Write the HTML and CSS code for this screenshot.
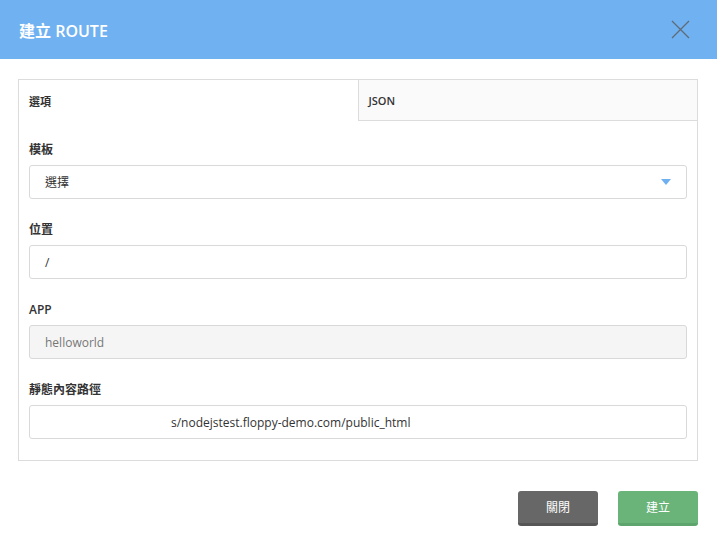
FILE: index.html
```html
<!DOCTYPE html>
<html>
<head>
<meta charset="utf-8">
<link rel="stylesheet" href="styles.css">
</head>
<body>
<div class="modal">
  <div class="header">
    <div class="title">建立 ROUTE</div>
    <svg class="close" width="19" height="19" viewBox="0 0 19 19"><path d="M1 1L18 18M18 1L1 18" stroke="#5f6b78" stroke-width="1.3" fill="none"/></svg>
  </div>
  <div class="body">
    <div class="panel">
      <div class="tabs">
        <div class="tab active">選項</div>
        <div class="tab">JSON</div>
      </div>
      <div class="form">
        <div class="field">
          <div class="label">模板</div>
          <div class="input select"><span>選擇</span><svg width="10" height="6" viewBox="0 0 10 6"><path d="M0 0H10L5 6Z" fill="#6fb1f0"/></svg></div>
        </div>
        <div class="field">
          <div class="label">位置</div>
          <div class="input">/</div>
        </div>
        <div class="field">
          <div class="label">APP</div>
          <div class="input disabled">helloworld</div>
        </div>
        <div class="field">
          <div class="label">靜態內容路徑</div>
          <div class="input scrolled"><span>s/nodejstest.floppy-demo.com/public_html</span></div>
        </div>
      </div>
    </div>
  </div>
  <div class="footer">
    <button class="btn close-btn">關閉</button>
    <button class="btn create-btn">建立</button>
  </div>
</div>
</body>
</html>
```
FILE: styles.css
```css
* { box-sizing: border-box; }
html, body { margin: 0; padding: 0; background: #fff; }
body { font-family: "Open Sans", "Noto Sans CJK TC", sans-serif; color: #333; width: 717px; height: 536px; overflow: hidden; }
.header { height: 59px; background: #70b2f1; display: flex; align-items: center; justify-content: space-between; padding: 0 27px 0 19px; }
.title { color: #fff; font-size: 16px; font-weight: 600; letter-spacing: 0; }
.close { display: block; }
.body { padding: 20px 19px 0 18px; }
.panel { border: 1px solid #dcdcdc; height: 382px; }
.tabs { display: flex; height: 41px; }
.tab { flex: 1; display: flex; align-items: center; padding-left: 10px; font-size: 11px; font-weight: 600; color: #333; background: #fafafa; border-left: 1px solid #dcdcdc; border-bottom: 1px solid #dcdcdc; }
.tab.active { background: #fff; border-left: none; border-bottom: none; }
.form { padding: 20px 10px 0 10px; display: flex; flex-direction: column; gap: 22px; }
.field { display: flex; flex-direction: column; }
.label { font-size: 12px; font-weight: 600; color: #333; height: 17px; line-height: 17px; margin-bottom: 7px; }
.input { height: 34px; border: 1px solid #d9d9d9; border-radius: 3px; font-size: 12px; color: #333; padding: 0 15px; display: flex; align-items: center; white-space: nowrap; }
.select { justify-content: space-between; padding-right: 15px; }
.select svg { display: block; }
.disabled { background: #f5f5f5; color: #777; }
.scrolled { padding-left: 141px; }
.footer { display: flex; justify-content: flex-end; gap: 20px; padding: 30px 19px 0 0; }
.btn { width: 80px; height: 35px; border: none; border-radius: 3px; font-family: "Open Sans", "Noto Sans CJK TC", sans-serif; font-size: 12px; color: #fff; padding: 0; }
.close-btn { background: #666766; border-bottom: 3px solid #555655; }
.create-btn { background: #6ab47a; border-bottom: 3px solid #5ea56d; }
```
